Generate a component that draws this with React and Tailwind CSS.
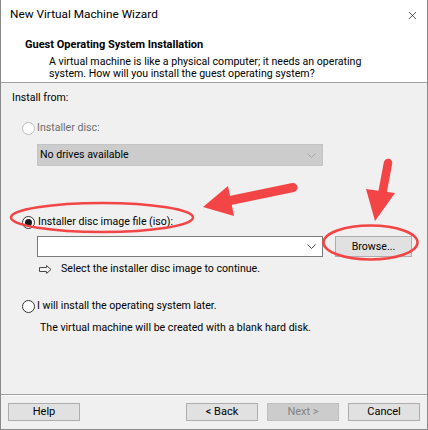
import { X } from 'lucide-react'

const font = { fontFamily: 'Roboto, "Noto Sans", "Liberation Sans", sans-serif' }

function Radio({ checked, disabled }) {
  return (
    <span
      className={`flex h-[13px] w-[13px] shrink-0 items-center justify-center rounded-full border bg-white ${
        disabled ? 'border-[#bcbcbc]' : 'border-[#333333]'
      }`}
    >
      {checked && <span className="h-[7px] w-[7px] rounded-full bg-[#1a1a1a]" />}
    </span>
  )
}

function Chevron({ color }) {
  return (
    <svg width="9" height="5" viewBox="0 0 9 5" className="shrink-0">
      <path d="M0.5 0.5 L4.5 4.5 L8.5 0.5" fill="none" stroke={color} strokeWidth="1" />
    </svg>
  )
}

function HintArrow() {
  return (
    <svg width="13" height="9" viewBox="0 0 13 9" className="shrink-0">
      <path
        d="M0.5 2.5 H7.5 V0.5 L12 4.5 L7.5 8.5 V6.5 H0.5 Z"
        fill="none"
        stroke="#4a4a4a"
        strokeWidth="1"
      />
    </svg>
  )
}

function Button({ children, disabled }) {
  return (
    <div
      className={`flex h-[18px] w-[72px] items-center justify-center border text-[11px] ${
        disabled
          ? 'border-[#bfbfbf] bg-[#cccccc] text-[#838383]'
          : 'border-[#adadad] bg-[#e1e1e1] text-black'
      }`}
    >
      {children}
    </div>
  )
}

// red callouts drawn over the dialog
function Callouts() {
  const red = '#f34545'
  return (
    <svg
      className="pointer-events-none absolute inset-0"
      width="428"
      height="430"
      viewBox="0 0 428 430"
    >
      <ellipse cx="101" cy="217.5" rx="91" ry="14.5" fill="none" stroke={red} strokeWidth="2.5" />
      <ellipse cx="369.5" cy="242.5" rx="47" ry="17" fill="none" stroke={red} strokeWidth="2.5" />
      <line x1="222" y1="202" x2="292" y2="187.5" stroke={red} strokeWidth="9" strokeLinecap="round" />
      <polygon points="202,207 227,186 233,216" fill={red} />
      <line x1="387" y1="163" x2="381" y2="195" stroke={red} strokeWidth="8.5" strokeLinecap="round" />
      <polygon points="365,189 394,193 374,221" fill={red} />
    </svg>
  )
}

export default function App() {
  return (
    <div
      style={font}
      className="relative h-[430px] w-[428px] overflow-hidden border-x border-b border-[#8a8a8a] bg-[#f0f0f0] text-[10.6px] text-black"
    >
      {/* title bar */}
      <div className="flex h-[30px] items-center justify-between bg-white pl-[9px] pr-[8px] text-[11.8px]">
        <span>New Virtual Machine Wizard</span>
        <X size={13} strokeWidth={1.2} className="text-black" />
      </div>

      {/* page header */}
      <div className="h-[53px] border-b border-[#a0a0a0] bg-white pl-[24px] pt-[7px]">
        <div className="h-[16px] text-[11px] font-bold leading-[16px]">
          Guest Operating System Installation
        </div>
        <div className="mt-[3px] pl-[24px] leading-[12px]">
          A virtual machine is like a physical computer; it needs an operating
          <br />
          system. How will you install the guest operating system?
        </div>
      </div>

      {/* body */}
      <div className="h-[311px] pl-[11px] pt-[6px]">
        <div className="flex h-[18px] items-center">Install from:</div>

        <div className="mt-[12px] flex h-[18px] items-center gap-[2px] pl-[10px] text-[#6d6d6d]">
          <Radio disabled />
          <span>Installer disc:</span>
        </div>

        <div className="ml-[25px] mt-[7px] flex h-[22px] w-[286px] items-center justify-between border border-[#c4c4c4] bg-[#cccccc] pl-[2px] pr-[6px]">
          <span>No drives available</span>
          <Chevron color="#a8a8a8" />
        </div>

        <div className="mt-[47px] flex h-[18px] items-center gap-[3px] pl-[10px]">
          <Radio checked />
          <span>Installer disc image file (iso):</span>
        </div>

        <div className="mt-[5px] flex h-[21px] items-center pl-[25px]">
          <div className="flex h-[21px] w-[286px] items-center justify-end border border-[#7a7a7a] bg-white pr-[6px]">
            <Chevron color="#444444" />
          </div>
          <div className="ml-[12px] flex h-[21px] w-[77px] items-center justify-center border border-[#adadad] bg-[#e1e1e1]">
            Browse...
          </div>
        </div>

        <div className="mt-[3px] flex h-[18px] items-center gap-[9px] pl-[27px]">
          <HintArrow />
          <span>Select the installer disc image to continue.</span>
        </div>

        <div className="mt-[19px] flex h-[18px] items-center gap-[2px] pl-[10px]">
          <Radio />
          <span>I will install the operating system later.</span>
        </div>

        <div className="mt-[4px] flex h-[18px] items-center pl-[28px]">
          The virtual machine will be created with a blank hard disk.
        </div>
      </div>

      {/* footer */}
      <div className="border-t border-[#a0a0a0]">
        <div className="flex items-center border-t border-white pl-[7px] pr-[7px] pt-[7px]">
          <Button>Help</Button>
          <div className="ml-auto flex gap-[9px]">
            <Button>&lt; Back</Button>
            <Button disabled>Next &gt;</Button>
            <Button>Cancel</Button>
          </div>
        </div>
      </div>

      <Callouts />
    </div>
  )
}
